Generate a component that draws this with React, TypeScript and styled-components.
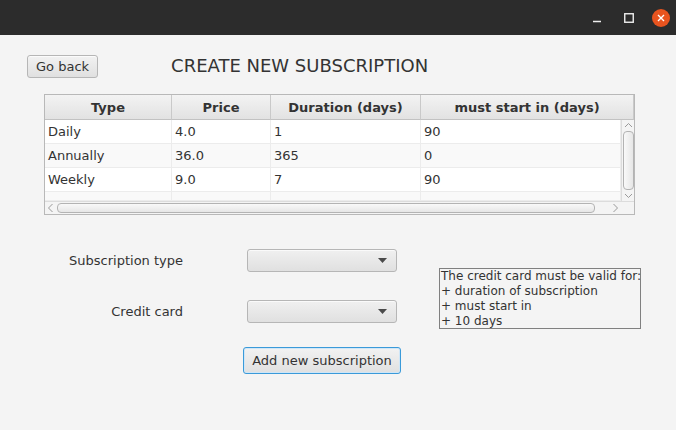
import React from 'react';
import styled, { createGlobalStyle } from 'styled-components';

const GlobalStyle = createGlobalStyle`
  html, body {
    margin: 0;
    padding: 0;
    background: #f4f4f4;
    font-family: "DejaVu Sans", "Liberation Sans", sans-serif;
    color: #333;
  }
`;

interface Subscription {
  type: string;
  price: string;
  duration: string;
  startIn: string;
}

const Window = styled.div`
  width: 676px;
  height: 430px;
  display: flex;
  flex-direction: column;
  background: #f4f4f4;
  overflow: hidden;
`;

const TitleBar = styled.div`
  height: 35px;
  flex-shrink: 0;
  background: #2c2c2c;
  display: flex;
  align-items: center;
  justify-content: flex-end;
  padding-right: 6px;
  gap: 14px;
`;

const WinButton = styled.div`
  width: 18px;
  height: 18px;
  display: flex;
  align-items: center;
  justify-content: center;
`;

const CloseButton = styled(WinButton)`
  border-radius: 50%;
  background: #e8541f;
`;

const Content = styled.div`
  flex: 1;
  padding: 19px 0 0 0;
`;

const HeaderRow = styled.div`
  display: flex;
  align-items: center;
  padding-left: 27px;
  height: 24px;
`;

const Button = styled.button<{ $focused?: boolean }>`
  font-family: "DejaVu Sans", sans-serif;
  font-size: 13px;
  color: #333;
  height: ${({ $focused }) => ($focused ? '27px' : '23px')};
  padding: 0 8px;
  flex-shrink: 0;
  white-space: nowrap;
  border-radius: 3px;
  border: 1px solid ${({ $focused }) => ($focused ? '#3a9ad9' : '#b6b6b6')};
  box-shadow: ${({ $focused }) =>
    $focused ? 'inset 0 0 0 1px #cfe6f7' : 'inset 0 1px 0 #fbfbfb'};
  background: linear-gradient(#f2f2f2, #e0e0e0);
  cursor: default;
`;

const Title = styled.h1`
  margin: 0 0 0 73px;
  font-size: 18px;
  font-weight: normal;
  color: #333;
  line-height: 24px;
`;

const TableBox = styled.div`
  margin: 16px 0 0 44px;
  width: 591px;
  height: 121px;
  box-sizing: border-box;
  border: 1px solid #b8b8b8;
  background: #f4f4f4;
  display: grid;
  grid-template-columns: 1fr 13px;
  grid-template-rows: 106px 13px;
  overflow: hidden;
`;

const TableArea = styled.div`
  grid-column: 1 / 3;
  grid-row: 1;
  min-height: 0;
  overflow: hidden;
  display: grid;
  grid-template-columns: 127px 99px 150px 200px 13px;
  grid-template-rows: 25px repeat(3, 24px) 9px;
  background: #fff;
`;

const HeadCell = styled.div<{ $span?: number }>`
  grid-column: span ${({ $span }) => $span ?? 1};
  background: linear-gradient(#f3f3f3, #e2e2e2);
  border-right: 1px solid #c9c9c9;
  border-bottom: 1px solid #c2c2c2;
  font-weight: bold;
  font-size: 13px;
  color: #333;
  display: flex;
  align-items: center;
  justify-content: center;
  &:last-child {
    border-right: none;
  }
`;

const Cell = styled.div<{ $odd: boolean }>`
  background: ${({ $odd }) => ($odd ? '#f9f9f9' : '#ffffff')};
  border-right: 1px solid #ececec;
  border-bottom: 1px solid #ececec;
  font-size: 13px;
  color: #333;
  padding-left: 3px;
  display: flex;
  align-items: center;
  white-space: nowrap;
  overflow: hidden;
`;

const VScroll = styled.div`
  grid-column: 5;
  grid-row: 2 / 6;
  background: #f4f4f4;
  border-left: 1px solid #dcdcdc;
  display: flex;
  flex-direction: column;
  align-items: center;
  padding: 2px 0;
  box-sizing: border-box;
`;

const HScroll = styled.div`
  grid-column: 1;
  grid-row: 2;
  background: #f4f4f4;
  border-top: 1px solid #dcdcdc;
  display: flex;
  align-items: center;
  padding: 0 2px;
`;

const Corner = styled.div`
  grid-column: 2;
  grid-row: 2;
  background: #f4f4f4;
  border-top: 1px solid #dcdcdc;
`;

const Thumb = styled.div<{ $vertical?: boolean; $gapEnd?: number }>`
  flex: 1;
  border: 1px solid #b3b3b3;
  border-radius: 4px;
  background: linear-gradient(${({ $vertical }) => ($vertical ? '90deg,' : '')} #f9f9f9, #e6e6e6);
  ${({ $vertical, $gapEnd = 3 }) =>
    $vertical ? 'width: 9px; margin: 3px 0;' : `height: 8px; margin: 0 ${$gapEnd}px 0 3px;`}
`;

const Arrow = styled.svg`
  flex-shrink: 0;
  display: block;
`;

const FormArea = styled.div`
  display: flex;
  margin-top: 34px;
`;

const FormColumn = styled.div`
  display: grid;
  grid-template-columns: 183px 150px;
  column-gap: 64px;
  row-gap: 28px;
  align-items: center;
`;

const Label = styled.div`
  font-size: 13px;
  color: #333;
  text-align: right;
`;

const Combo = styled.div`
  height: 23px;
  box-sizing: border-box;
  border: 1px solid #b6b6b6;
  border-radius: 3px;
  background: linear-gradient(#f0f0f0, #e0e0e0);
  box-shadow: inset 0 1px 0 #fafafa;
  display: flex;
  align-items: center;
  justify-content: flex-end;
  padding-right: 9px;
`;

const ButtonCell = styled.div`
  grid-column: 2;
  display: flex;
  justify-content: center;
  margin-top: -4px;
`;

const InfoBox = styled.div`
  margin: 19px 0 0 42px;
  width: 202px;
  height: 61px;
  box-sizing: border-box;
  border: 1px solid #808080;
  font-size: 12px;
  line-height: 15px;
  color: #333;
  padding: 0 0 0 1px;
  white-space: nowrap;
`;

const subscriptions: Subscription[] = [
  { type: 'Daily', price: '4.0', duration: '1', startIn: '90' },
  { type: 'Annually', price: '36.0', duration: '365', startIn: '0' },
  { type: 'Weekly', price: '9.0', duration: '7', startIn: '90' },
];

const columns = ['Type', 'Price', 'Duration (days)', 'must start in (days)'];

const Caret = () => (
  <svg width="9" height="5" viewBox="0 0 9 5">
    <path d="M0 0 L9 0 L4.5 5 Z" fill="#4a4a4a" />
  </svg>
);

const App: React.FC = () => {
  const rows: (Subscription | null)[] = [...subscriptions, null];

  return (
    <Window>
      <GlobalStyle />
      <TitleBar>
        <WinButton>
          <svg width="10" height="10" viewBox="0 0 10 10">
            <path d="M1 8.5 H9" stroke="#eee" strokeWidth="1.5" />
          </svg>
        </WinButton>
        <WinButton>
          <svg width="10" height="10" viewBox="0 0 10 10">
            <rect x="0.75" y="0.75" width="8.5" height="8.5" fill="none" stroke="#eee" strokeWidth="1.4" />
          </svg>
        </WinButton>
        <CloseButton>
          <svg width="8" height="8" viewBox="0 0 8 8">
            <path d="M1 1 L7 7 M7 1 L1 7" stroke="#fff" strokeWidth="1.4" />
          </svg>
        </CloseButton>
      </TitleBar>
      <Content>
        <HeaderRow>
          <Button>Go back</Button>
          <Title>CREATE NEW SUBSCRIPTION</Title>
        </HeaderRow>

        <TableBox>
          <TableArea>
            {columns.map((c, i) => (
              <HeadCell key={c} $span={i === columns.length - 1 ? 2 : 1}>
                {c}
              </HeadCell>
            ))}
            {rows.map((r, i) => (
              <React.Fragment key={i}>
                <Cell $odd={i % 2 === 1}>{r?.type}</Cell>
                <Cell $odd={i % 2 === 1}>{r?.price}</Cell>
                <Cell $odd={i % 2 === 1}>{r?.duration}</Cell>
                <Cell $odd={i % 2 === 1}>{r?.startIn}</Cell>
                {i === 0 && (
                  <VScroll>
                    <Arrow width="9" height="6" viewBox="0 0 9 6">
                      <path d="M1 5 L4.5 1.5 L8 5" fill="none" stroke="#9a9a9a" strokeWidth="1" />
                    </Arrow>
                    <Thumb $vertical />
                    <Arrow width="9" height="6" viewBox="0 0 9 6">
                      <path d="M1 1 L4.5 4.5 L8 1" fill="none" stroke="#9a9a9a" strokeWidth="1" />
                    </Arrow>
                  </VScroll>
                )}
              </React.Fragment>
            ))}
          </TableArea>
          <HScroll>
            <Arrow width="7" height="10" viewBox="0 0 7 10">
              <path d="M5.5 1 L1.5 5 L5.5 9" fill="none" stroke="#9a9a9a" strokeWidth="1" />
            </Arrow>
            <Thumb $gapEnd={17} />
            <Arrow width="7" height="10" viewBox="0 0 7 10">
              <path d="M1.5 1 L5.5 5 L1.5 9" fill="none" stroke="#9a9a9a" strokeWidth="1" />
            </Arrow>
          </HScroll>
          <Corner />
        </TableBox>

        <FormArea>
          <FormColumn>
            <Label>Subscription type</Label>
            <Combo>
              <Caret />
            </Combo>
            <Label>Credit card</Label>
            <Combo>
              <Caret />
            </Combo>
            <ButtonCell>
              <Button $focused>Add new subscription</Button>
            </ButtonCell>
          </FormColumn>
          <InfoBox>
            The credit card must be valid for:
            <br />+ duration of subscription
            <br />+ must start in
            <br />+ 10 days
          </InfoBox>
        </FormArea>
      </Content>
    </Window>
  );
};

export default App;
